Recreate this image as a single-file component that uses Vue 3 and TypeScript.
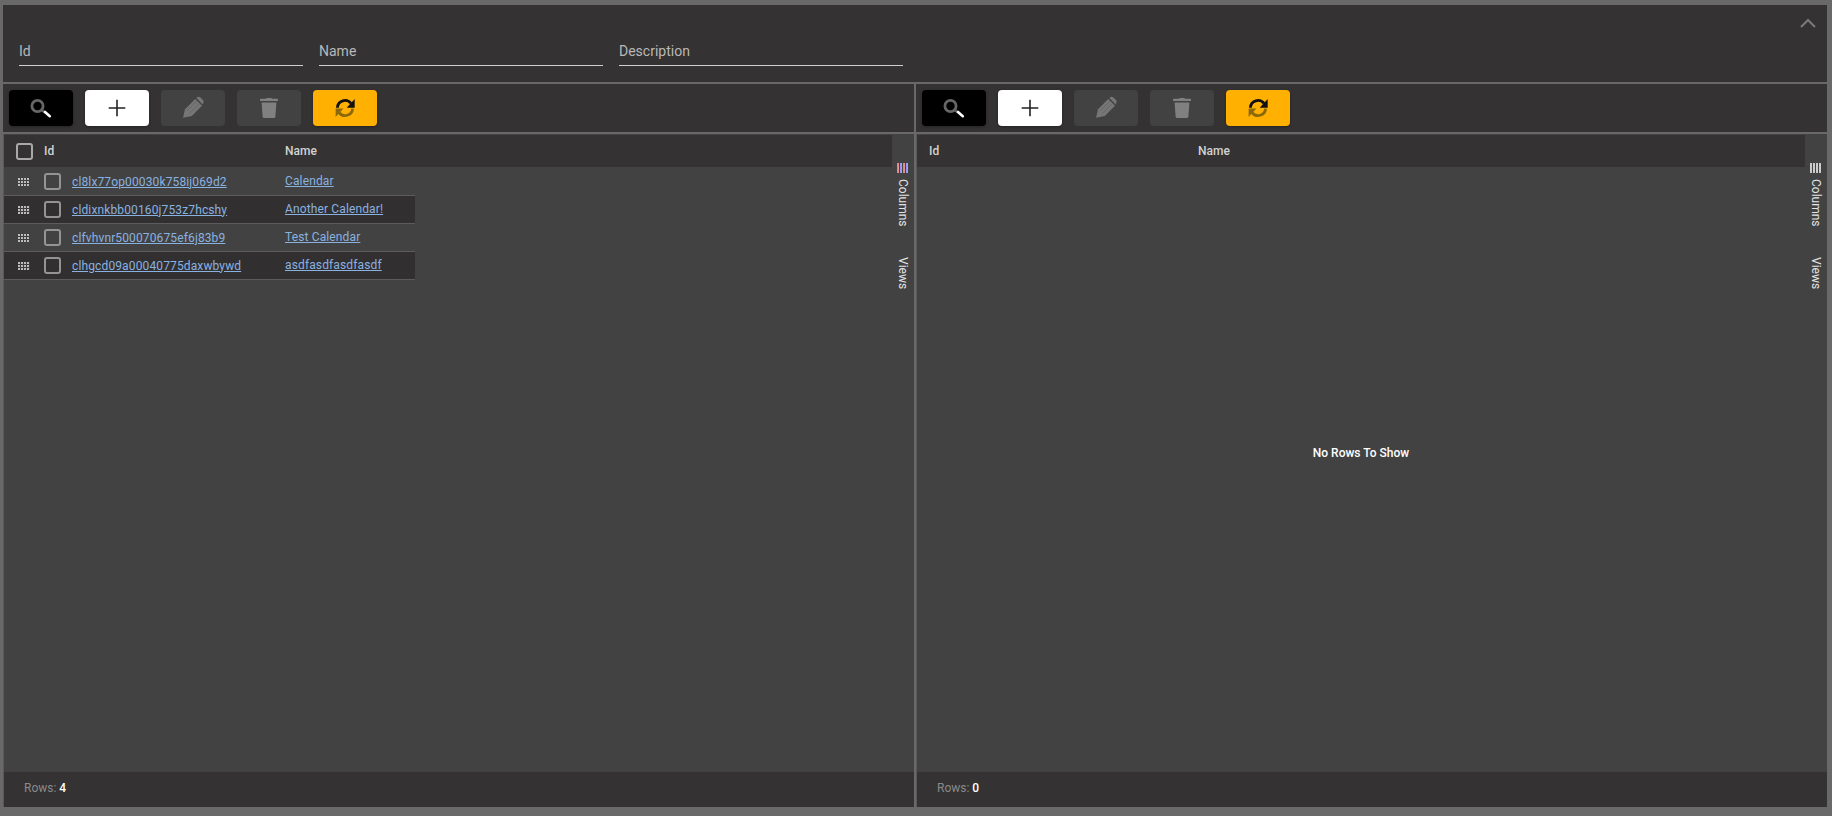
<script setup lang="ts">
interface Row { id: string; name: string }
interface Pane { key: string; rows: Row[] }

const filters: string[] = ['Id', 'Name', 'Description']
const allRows: Row[] = [
  { id: 'cl8lx77op00030k758ij069d2', name: 'Calendar' },
  { id: 'cldixnkbb00160j753z7hcshy', name: 'Another Calendar!' },
  { id: 'clfvhvnr500070675ef6j83b9', name: 'Test Calendar' },
  { id: 'clhgcd09a00040775daxwbywd', name: 'asdfasdfasdfasdf' },
]
const panes: Pane[] = [
  { key: 'left', rows: allRows },
  { key: 'right', rows: [] },
]
</script>

<template>
  <div class="page">
    <section class="filters">
      <div class="collapse-row">
        <svg class="chevron" width="16" height="10" viewBox="0 0 16 10">
          <polyline points="1,9 8,2 15,9" fill="none" stroke="#7a7a7a" stroke-width="2" />
        </svg>
      </div>
      <div class="fields">
        <div v-for="f in filters" :key="f" class="field">{{ f }}</div>
      </div>
    </section>

    <div class="panes">
      <section v-for="pane in panes" :key="pane.key" class="pane" :class="`pane-${pane.key}`">
        <div class="toolbar">
          <button class="btn btn-black" type="button" aria-label="Search">
            <svg width="24" height="24" viewBox="0 0 24 24" fill="none">
              <circle cx="8.5" cy="10" r="5.6" stroke="#666" stroke-width="2.8" />
              <path d="M12.5 14 L16 16.6" stroke="#666" stroke-width="2.4" />
              <path d="M16 16 L20.8 20.2" stroke="#fff" stroke-width="2.6" stroke-linecap="round" />
            </svg>
          </button>
          <button class="btn btn-white" type="button" aria-label="Add">
            <svg width="24" height="24" viewBox="0 0 24 24" fill="none">
              <path d="M12 3.7 V20.3 M3.7 12 H20.3" stroke="#222" stroke-width="1.6" />
            </svg>
          </button>
          <button class="btn btn-off" type="button" aria-label="Edit">
            <svg width="24" height="24" viewBox="0 0 24 24">
              <path d="M2 21.7 L4 13.2 L14.2 3 L21 9.8 L10.8 20 Z" fill="#767676" />
              <path d="M15.4 1.9 L16.4 1 Q18 0.2 19.4 1.4 L22 4 Q23.2 5.6 22.2 7.2 L21.6 8.6 Z" fill="#767676" />
              <path d="M6 15 L16 5 M8.4 17.6 L18.4 7.6" stroke="#5e5e5e" stroke-width="0.6" />
            </svg>
          </button>
          <button class="btn btn-off" type="button" aria-label="Delete">
            <svg width="24" height="24" viewBox="0 0 24 24">
              <path d="M3 3.4 Q3 2.8 3.6 2.8 H9 L9.6 2 H14.4 L15 2.8 H20.4 Q21 2.8 21 3.4 V5 H3 Z" fill="#808080" />
              <path d="M4.6 6.6 H19.4 L18.4 20.4 Q18.2 22 16.6 22 H7.4 Q5.8 22 5.6 20.4 Z" fill="#808080" />
            </svg>
          </button>
          <button class="btn btn-amber" type="button" aria-label="Refresh">
            <svg width="24" height="24" viewBox="0 0 24 24" fill="none">
              <path d="M4.4 11.7 A7.6 7.6 0 0 1 18 7.4" stroke="#111" stroke-width="2.8" />
              <path d="M21.7 3 V11.7 H13.7 Z" fill="#111" />
              <path d="M19.6 12.6 A7.6 7.6 0 0 1 6 16.6" stroke="#8a6808" stroke-width="2.8" />
              <path d="M2.6 21 V12.4 H10.4 Z" fill="#8a6808" />
            </svg>
          </button>
        </div>

        <div class="grid">
          <div class="grid-main">
            <div class="table">
              <div class="thead">
                <span v-if="pane.key === 'left'" class="check check-head"></span>
                <span class="th th-id">Id</span>
                <span class="th th-name">Name</span>
              </div>
              <div class="tbody">
                <div v-for="(row, i) in pane.rows" :key="row.id" class="tr" :class="{ alt: i % 2 === 1 }">
                  <span class="drag">
                    <svg width="12" height="8" viewBox="0 0 12 8">
                      <path d="M0 0h12v8H0z" fill="#bcbcbc" />
                      <path d="M2.5 0v8M5.5 0v8M8.5 0v8M11.5 0v8M0 2.5h12M0 5.5h12" stroke="#3f3f3f" stroke-width="1" />
                    </svg>
                  </span>
                  <span class="check"></span>
                  <a class="cell cell-id" href="#" @click.prevent>{{ row.id }}</a>
                  <a class="cell cell-name" href="#" @click.prevent>{{ row.name }}</a>
                </div>
                <div v-if="pane.rows.length === 0" class="empty">No Rows To Show</div>
              </div>
            </div>
            <aside class="side">
              <div class="side-tab side-columns">
                <svg v-if="pane.key === 'left'" width="12" height="10" viewBox="0 0 12 10">
                  <path d="M0.5 0v10M3.5 0v10M6.5 0v10M9.5 0v10" stroke="#8f9cf0" stroke-width="1" />
                  <path d="M1.5 0v10M4.5 0v10M7.5 0v10M10.5 0v10" stroke="#f08f8f" stroke-width="1" />
                </svg>
                <svg v-else width="12" height="10" viewBox="0 0 12 10">
                  <path d="M1 0v10M4 0v10M7 0v10M10 0v10" stroke="#c9c9c9" stroke-width="2" />
                </svg>
                <span class="side-label">Columns</span>
              </div>
              <div class="side-tab side-views">
                <span class="side-label">Views</span>
              </div>
            </aside>
          </div>
          <footer class="footer">
            <span class="rows-label">Rows:</span>
            <b class="rows-count">{{ pane.rows.length }}</b>
          </footer>
        </div>
      </section>
    </div>
  </div>
</template>

<style>
html,
body {
  margin: 0;
  background: #696969;
}
</style>

<style scoped>
.page {
  box-sizing: border-box;
  width: 1832px;
  height: 816px;
  padding: 5px 5px 9px 3px;
  display: flex;
  flex-direction: column;
  gap: 2px;
  background: #696969;
  font-family: Roboto, "Liberation Sans", sans-serif;
  font-size: 12px;
  overflow: hidden;
}
.filters {
  height: 77px;
  flex: none;
  background: #343233;
  display: flex;
  flex-direction: column;
}
.collapse-row {
  height: 18px;
  padding: 13px 11px 0 0;
  display: flex;
  justify-content: flex-end;
  flex: none;
}
.chevron {
  display: block;
}
.fields {
  display: flex;
  gap: 16px;
  padding: 0 16px;
}
.field {
  box-sizing: border-box;
  width: 284px;
  height: 31px;
  padding-top: 7px;
  margin-top: -1px;
  color: #b8b8b8;
  font-size: 14px;
  line-height: 18px;
  border-bottom: 1px solid #cfcfcf;
}
.panes {
  flex: 1;
  min-height: 0;
  display: flex;
  gap: 2px;
}
.pane {
  flex: 1 1 0;
  min-width: 0;
  display: flex;
  flex-direction: column;
  gap: 2px;
}
.toolbar {
  height: 48px;
  flex: none;
  box-sizing: border-box;
  padding: 6px;
  display: flex;
  gap: 12px;
  background: #343233;
}
.btn {
  width: 64px;
  height: 36px;
  padding: 0;
  border: 0;
  border-radius: 4px;
  display: flex;
  align-items: center;
  justify-content: center;
  box-shadow: 0 1px 3px rgba(0, 0, 0, 0.3);
}
.btn svg {
  display: block;
}
.btn-black {
  background: #000;
}
.btn-white {
  background: #fff;
}
.btn-off {
  background: #424242;
  box-shadow: none;
}
.btn-amber {
  background: #ffb000;
}
.grid {
  flex: 1;
  min-height: 0;
  display: flex;
  flex-direction: column;
  background: #424242;
  border-left: 1px solid #595959;
}
.grid-main {
  flex: 1;
  min-height: 0;
  display: flex;
  padding-top: 1px;
}
.table {
  flex: 1;
  min-width: 0;
  display: flex;
  flex-direction: column;
}
.thead {
  height: 32px;
  flex: none;
  display: flex;
  align-items: center;
  background: #343233;
  color: #d2d2d2;
  font-weight: 500;
}
.th-id {
  width: 241px;
  margin-left: 6px;
}
.pane-right .th-id {
  width: 269px;
  margin-left: 12px;
}
.check {
  box-sizing: border-box;
  flex: none;
  width: 17px;
  height: 17px;
  border: 2px solid #949494;
  border-radius: 3px;
}
.check-head {
  margin-left: 12px;
  margin-right: 5px;
  border-color: #a9a9a9;
}
.tbody {
  flex: 1;
  min-height: 0;
  margin-top: 1px;
  display: flex;
  flex-direction: column;
}
.tr {
  box-sizing: border-box;
  width: 411px;
  height: 28px;
  flex: none;
  display: flex;
  align-items: center;
  border-bottom: 1px solid #5c5c5c;
}
.tr.alt {
  background: #312f30;
}
.drag {
  width: 12px;
  margin-left: 14px;
  margin-right: 14px;
  display: flex;
}
.drag svg {
  display: block;
}
.cell {
  color: #8ab2e0;
  text-decoration: underline;
  line-height: 16px;
  letter-spacing: 0.13px;
}
.cell-id {
  width: 213px;
  margin-left: 11px;
}
.cell-name {
  margin-top: -2px;
}
.empty {
  flex: 1;
  display: flex;
  align-items: center;
  justify-content: center;
  color: #fff;
  font-weight: 500;
  padding-bottom: 34px;
}
.side {
  width: 22px;
  flex: none;
  display: flex;
  flex-direction: column;
  padding-top: 28px;
  align-items: center;
  color: #e4e4e4;
}
.side-tab {
  display: flex;
  flex-direction: column;
  align-items: center;
}
.side-columns svg {
  display: block;
  margin-bottom: 6px;
}
.side-views {
  margin-top: 30px;
}
.side-label {
  writing-mode: vertical-lr;
  font-size: 12px;
  line-height: 12px;
}
.footer {
  box-sizing: border-box;
  height: 35px;
  padding-bottom: 3px;
  flex: none;
  display: flex;
  align-items: center;
  gap: 3px;
  padding-left: 20px;
  background: #343233;
  color: #8a8a8a;
}
.rows-count {
  color: #fff;
  font-weight: 500;
}
</style>
